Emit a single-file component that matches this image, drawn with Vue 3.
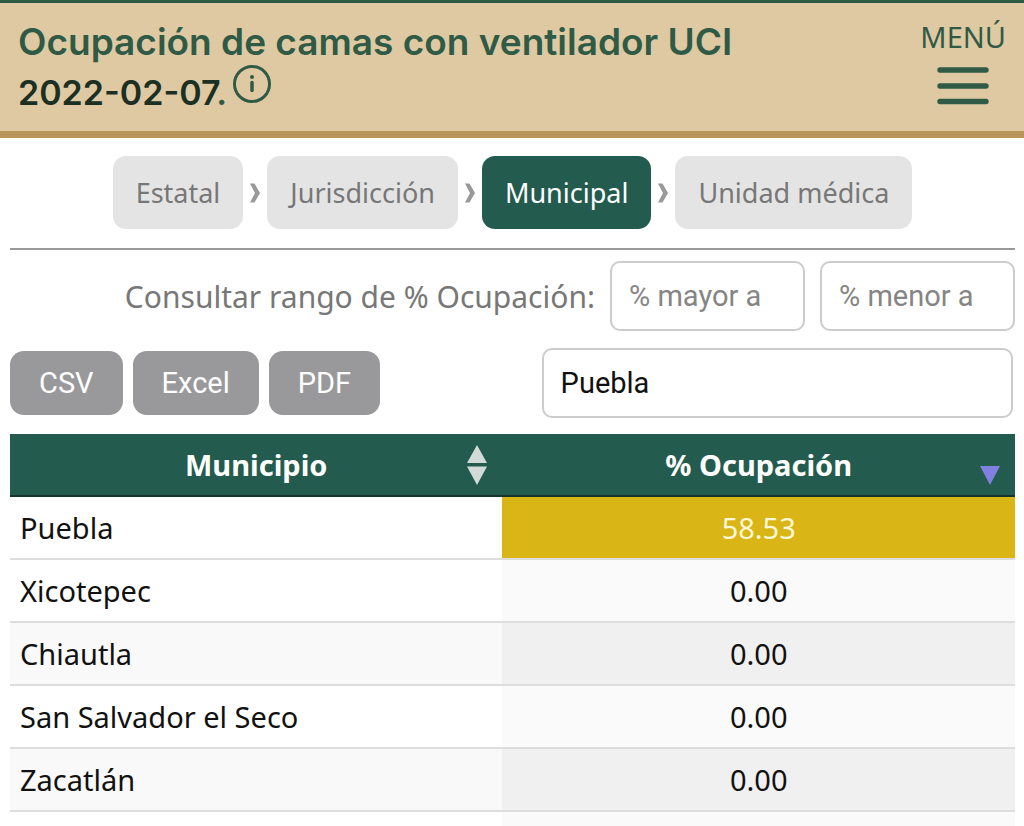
<template>
  <div class="page">
    <header class="top-bar">
      <h1>
        Ocupación de camas con ventilador UCI<br />
        <span class="date"><span class="day">2022-02-07</span>.</span>
        <button class="info" aria-label="Información">
          <svg viewBox="0 0 40 40" width="40" height="40">
            <circle cx="20" cy="20" r="17.5" fill="none" stroke="currentColor" stroke-width="3" />
            <circle cx="20" cy="13" r="2" fill="currentColor" />
            <path d="M20 18.500v8" stroke="currentColor" stroke-width="3.500" stroke-linecap="round" />
          </svg>
        </button>
      </h1>
      <button class="menu">
        <span>MENÚ</span>
        <svg viewBox="0 0 52 38" width="52" height="38">
          <path d="M3 3h46M3 19h46M3 34.500h46" stroke="currentColor" stroke-width="5.400" stroke-linecap="round" />
        </svg>
      </button>
    </header>

    <main>
      <nav class="levels">
        <template v-for="(level, index) in levels" :key="level">
          <span v-if="index > 0" class="separator">
            <svg viewBox="0 0 10 20" width="10" height="20">
              <path d="M0 0.500h4.500L10 10 4.500 19.500H0L5 10z" fill="currentColor" />
            </svg>
          </span>
          <button :class="{ active: level === current }" @click="current = level">{{ level }}</button>
        </template>
      </nav>

      <div class="range">
        <label for="mayor">Consultar rango de % Ocupación:</label>
        <input id="mayor" v-model="min" type="text" placeholder="% mayor a" />
        <input v-model="max" type="text" placeholder="% menor a" aria-label="% menor a" />
      </div>

      <div class="tools">
        <div class="exports">
          <button v-for="format in formats" :key="format">{{ format }}</button>
        </div>
        <input v-model="search" type="text" aria-label="Buscar" />
      </div>

      <table>
        <thead>
          <tr>
            <th class="name">
              <div class="heading">
                <span class="label">Municipio</span>
                <svg class="sort" viewBox="0 0 22 40" width="22" height="40">
                  <path d="M11 0L21 18H1zM1 21.500h20L11 40z" fill="#d3dbd8" />
                </svg>
              </div>
            </th>
            <th>
              <div class="heading">
                <span class="label">% Ocupación</span>
                <svg class="sort" viewBox="0 0 22 40" width="22" height="40">
                  <path d="M1 21h20L11 40z" fill="#8080e0" />
                </svg>
              </div>
            </th>
          </tr>
        </thead>
        <tbody>
          <tr v-for="(row, index) in rows" :key="index">
            <td>{{ row.name }}</td>
            <td class="value" :class="{ medium: row.value >= 50 }">{{ format(row.value) }}</td>
          </tr>
        </tbody>
      </table>
    </main>
  </div>
</template>

<script setup>
import { ref } from 'vue'

const levels = ['Estatal', 'Jurisdicción', 'Municipal', 'Unidad médica']
const formats = ['CSV', 'Excel', 'PDF']

const current = ref('Municipal')
const min = ref('')
const max = ref('')
const search = ref('Puebla')

const rows = [
  { name: 'Puebla', value: 58.53 },
  { name: 'Xicotepec', value: 0 },
  { name: 'Chiautla', value: 0 },
  { name: 'San Salvador el Seco', value: 0 },
  { name: 'Zacatlán', value: 0 },
  { name: '', value: null },
]

function format(value) {
  return value === null ? '' : value.toFixed(2)
}
</script>

<style>
body {
  margin: 0;
  background: #fff;
}
</style>

<style scoped>
.page {
  height: 100vh;
  overflow: hidden;
  font-family: "Noto Sans", "Open Sans", sans-serif;
  font-size: 29px;
  color: #111;
}

* {
  box-sizing: border-box;
}

button {
  font: inherit;
  border: none;
  cursor: pointer;
}

.top-bar {
  display: flex;
  justify-content: space-between;
  align-items: flex-start;
  padding: 14px 18px 13px;
  background: #dfc9a3;
  border-top: 3px solid #2b5a45;
  border-bottom: 7px solid #b9945b;
}

h1 {
  margin: 0;
  font-family: Inter, sans-serif;
  font-size: 37px;
  font-weight: 600;
  line-height: 50px;
  color: #2f5b46;
}

.date {
  font-size: 34px;
}

.day {
  color: #1b3022;
}

.info,
.menu {
  padding: 0;
  background: none;
  color: #2f5b46;
}

.info {
  margin-top: -3px;
  margin-left: 5px;
  vertical-align: top;
}

.info svg {
  display: block;
}

.menu {
  display: flex;
  flex-direction: column;
  align-items: center;
  line-height: 40px;
}

.menu svg {
  margin-top: 10px;
}

main {
  padding: 18px 9px 0 10px;
}

.levels {
  display: flex;
  justify-content: center;
  align-items: center;
  gap: 7px;
  padding-bottom: 19px;
  border-bottom: 2px solid #999;
}

.levels button {
  height: 73px;
  padding: 0 23px;
  border-radius: 13px;
  background: #e4e4e4;
  color: #777;
  font-size: 27px;
}

.levels button.active {
  background: #235b4e;
  color: #fff;
}

.separator {
  display: flex;
  color: #999;
}

.range {
  display: flex;
  justify-content: flex-end;
  align-items: center;
  gap: 15px;
  margin-top: 11px;
  font-size: 30px;
  color: #777;
}

input {
  height: 70px;
  padding: 0 17px;
  border: 2px solid #ccc;
  border-radius: 10px;
  background: #fff;
  font-family: Roboto, sans-serif;
  font-size: 29px;
  color: #111;
  min-width: 0;
}

input::placeholder {
  color: #858585;
}

.range input {
  width: 195px;
}

.tools {
  display: flex;
  justify-content: space-between;
  align-items: center;
  margin: 17px 2px 16px 0;
}

.tools input {
  width: 47%;
}

.exports {
  display: flex;
  gap: 10px;
}

.exports button {
  height: 64px;
  padding: 0 29px;
  border-radius: 14px;
  background: #99999b;
  color: #fff;
  font-family: Roboto, sans-serif;
}

table {
  width: 100%;
  border-collapse: separate;
  border-spacing: 0;
  table-layout: fixed;
}

th {
  height: 63px;
  padding: 0 14px;
  background: #235b4e;
  border-bottom: 2px solid #12362c;
  color: #fff;
  font-weight: 700;
}

th.name {
  width: 49%;
}

.heading {
  display: grid;
  grid-template-columns: 1fr auto 1fr;
  align-items: center;
}

.label {
  grid-column: 2;
}

.sort {
  justify-self: end;
}

td {
  height: 63px;
  padding: 0 10px;
  border-bottom: 2px solid #ddd;
}

.value {
  text-align: center;
  background: #fafafa;
}

tbody tr:nth-child(odd) td {
  background: #f9f9f9;
}

tbody tr:nth-child(odd) .value {
  background: #f0f0f0;
}

tbody tr:first-child td {
  background: #fff;
}

tbody tr .value.medium {
  background: #d9b516;
  color: #fdf8d8;
}
</style>
